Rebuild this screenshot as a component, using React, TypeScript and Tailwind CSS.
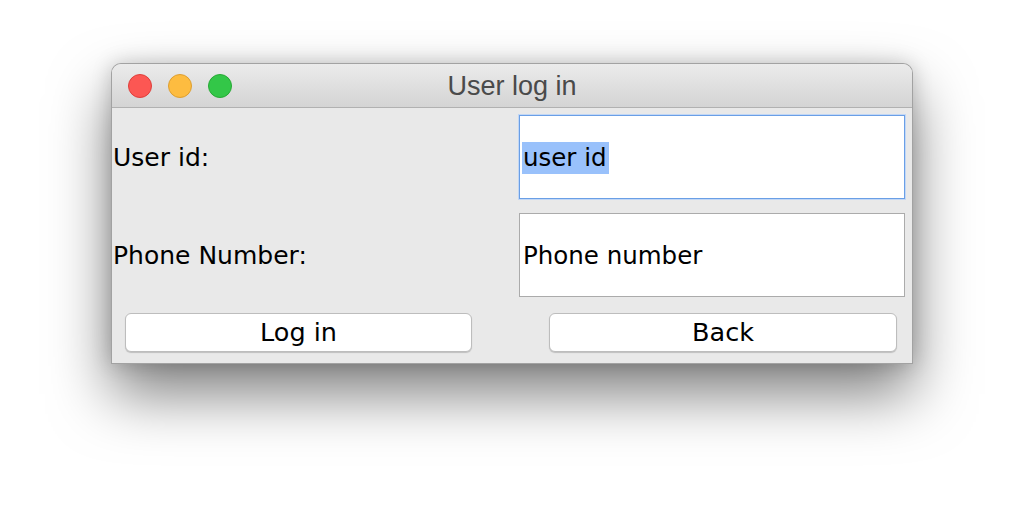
import React from "react";

const FONT = "font-['DejaVu_Sans',sans-serif]";

function TrafficLight({ fill, edge }: { fill: string; edge: string }) {
  return <div className={`h-6 w-6 rounded-full border ${fill} ${edge}`} />;
}

function Field({ value, focused }: { value: string; focused?: boolean }) {
  return (
    <div
      className={
        focused
          ? "flex h-[84px] w-[386px] items-center border border-[#6a9fe6] bg-white pl-[2px] shadow-[0_0_0_1px_#c2d7f5]"
          : "flex h-[84px] w-[386px] items-center border border-[#ababab] bg-white pl-[2px]"
      }
    >
      <span
        className={
          focused
            ? "mt-[2px] bg-[#99c1fb] pr-[2px] pl-[1px] text-[24.5px] leading-[32px] text-black"
            : "mt-[2px] pl-[1px] text-[24.5px] leading-[32px] text-black"
        }
      >
        {value}
      </span>
    </div>
  );
}

function Row({ label, children }: { label: string; children: React.ReactNode }) {
  return (
    <div className="flex items-center">
      <div className="w-[407px] pt-[2px] pl-[1px] text-[25px] text-black">{label}</div>
      {children}
    </div>
  );
}

function PushButton({ label, width }: { label: string; width: string }) {
  return (
    <button
      type="button"
      className={`flex h-[39px] ${width} items-center justify-center rounded-[6px] border border-[#bdbdbd] bg-white text-[25.5px] text-black shadow-[0_1px_1px_rgba(0,0,0,0.18)]`}
    >
      {label}
    </button>
  );
}

export default function App() {
  return (
    <div className={`flex h-[524px] w-full bg-white pt-[63px] pl-[111px] ${FONT}`}>
      <div className="flex h-[301px] w-[802px] flex-col overflow-hidden rounded-t-[10px] border border-black/30 bg-[#e9e9e9] shadow-[0_30px_60px_rgba(0,0,0,0.5),0_0_20px_rgba(0,0,0,0.18)]">
        <div className="relative flex h-[44px] shrink-0 items-center border-b border-[#b1b1b1] bg-gradient-to-b from-[#ebebeb] to-[#d4d4d4] pl-[16px]">
          <div className="flex gap-4">
            <TrafficLight fill="bg-[#fc5753]" edge="border-[#de3f3b]" />
            <TrafficLight fill="bg-[#fdbc40]" edge="border-[#dd9f31]" />
            <TrafficLight fill="bg-[#33c748]" edge="border-[#27a935]" />
          </div>
          <div className="absolute inset-x-0 top-0 flex h-full items-center justify-center pt-[2px] font-['Liberation_Sans',sans-serif] text-[27px] text-[#4a4a4a]">
            User log in
          </div>
        </div>

        <div className="flex flex-col pt-[7px]">
          <Row label="User id:">
            <Field value="user id" focused />
          </Row>
          <div className="mt-[14px]">
            <Row label="Phone Number:">
              <Field value="Phone number" />
            </Row>
          </div>
          <div className="mt-[16px] flex pl-[13px]">
            <PushButton label="Log in" width="w-[347px]" />
            <div className="w-[77px]" />
            <PushButton label="Back" width="w-[348px]" />
          </div>
        </div>
      </div>
    </div>
  );
}
